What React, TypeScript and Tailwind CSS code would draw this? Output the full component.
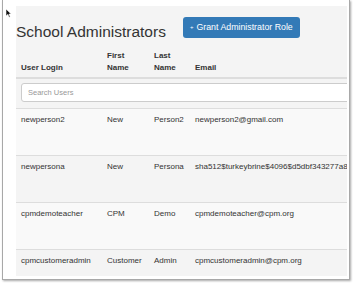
const users = [
  { login: 'newperson2', first: 'New', last: 'Person2', email: 'newperson2@gmail.com' },
  { login: 'newpersona', first: 'New', last: 'Persona', email: 'sha512$turkeybrine$4096$d5dbf343277a8e1a90c4f' },
  { login: 'cpmdemoteacher', first: 'CPM', last: 'Demo', email: 'cpmdemoteacher@cpm.org' },
  { login: 'cpmcustomeradmin', first: 'Customer', last: 'Admin', email: 'cpmcustomeradmin@cpm.org' },
];

function Cursor() {
  return (
    <svg className="absolute left-[5px] top-[8px]" width="7" height="10" viewBox="0 0 7 10">
      <path d="M1 1 L1 8 L2.8 6.4 L4.2 9.2 L5.2 8.7 L3.9 6 L6.2 6 Z" fill="#111" stroke="#fff" strokeWidth="0.6" />
    </svg>
  );
}

export default function App() {
  return (
    <div className="relative w-[353px] h-[283px] bg-white overflow-hidden font-['Liberation_Sans',Arial,sans-serif] text-[#333]">
      <div className="ml-[2px] w-[348px] h-[280px] border-l border-r border-b border-[#a8a8a8] shadow-[1px_1px_2px_rgba(0,0,0,0.35)] bg-white pl-[13px] pr-[2px] pt-[6px] pb-[3px]">
        <div className="h-full bg-[#f4f4f4] overflow-hidden">

          <div className="flex items-start h-[36px]">
            <h1 className="mt-[17px] text-[15.5px] leading-[18px] font-normal whitespace-nowrap">School Administrators</h1>
            <button className="mt-[11px] ml-[17px] h-[21px] px-[7px] rounded-[3px] bg-[#337ab7] text-white text-[8.8px] whitespace-nowrap flex items-center gap-[3px]">
              <span className="text-[6px]">+</span>
              <span>Grant Administrator Role</span>
            </button>
          </div>

          <div className="flex items-end h-[37px] border-b-2 border-[#dddddd] text-[8px] font-bold leading-[12px] pb-[3px]">
            <div className="w-[86px] pl-[5px] shrink-0">User Login</div>
            <div className="w-[47px] pl-[5px] shrink-0">First<br />Name</div>
            <div className="w-[41px] pl-[5px] shrink-0">Last<br />Name</div>
            <div className="pl-[5px] shrink-0">Email</div>
          </div>

          <div className="h-[30px] border-b border-[#dddddd] pt-[4px] pl-[5px]">
            <div className="w-[340px] h-[19px] bg-white border border-[#cccccc] rounded-[3px] flex items-center pl-[6px] text-[7.5px] text-[#999]">
              Search Users
            </div>
          </div>

          {users.map((u, i) => (
            <div
              key={u.login}
              className={`flex h-[47px] border-b border-[#dddddd] pt-[5px] text-[8px] leading-[12px] whitespace-nowrap ${i % 2 === 0 ? 'bg-[#f9f9f9]' : 'bg-[#f4f4f4]'}`}
            >
              <div className="w-[86px] pl-[5px] shrink-0">{u.login}</div>
              <div className="w-[47px] pl-[5px] shrink-0">{u.first}</div>
              <div className="w-[41px] pl-[5px] shrink-0">{u.last}</div>
              <div className="pl-[5px] shrink-0">{u.email}</div>
            </div>
          ))}
        </div>
      </div>
      <Cursor />
    </div>
  );
}
